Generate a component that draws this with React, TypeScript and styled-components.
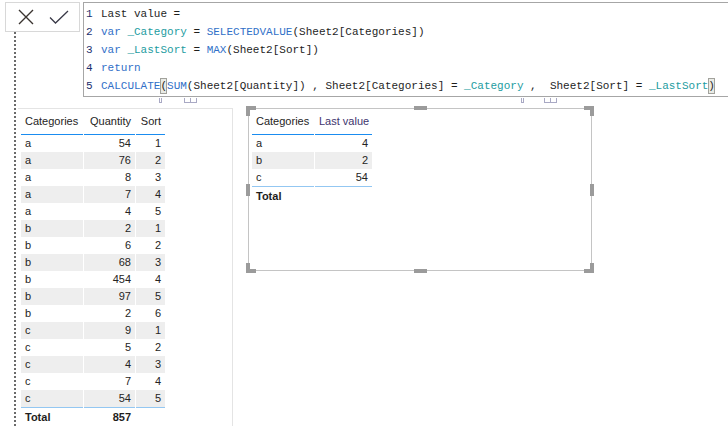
import styled, { createGlobalStyle } from 'styled-components';

const GlobalStyle = createGlobalStyle`
  html, body {
    margin: 0;
    padding: 0;
    background: #ffffff;
  }
  body {
    font-family: "Liberation Sans", Arial, sans-serif;
    color: #252423;
  }
`;

type Kind = 'plain' | 'kw' | 'var' | 'brace';
type Token = { t: string; k?: Kind };

const codeLines: Token[][] = [
  [{ t: 'Last value =' }],
  [
    { t: 'var', k: 'kw' },
    { t: ' ' },
    { t: '_Category', k: 'var' },
    { t: ' = ' },
    { t: 'SELECTEDVALUE', k: 'kw' },
    { t: '(Sheet2[Categories])' },
  ],
  [
    { t: 'var', k: 'kw' },
    { t: ' ' },
    { t: '_LastSort', k: 'var' },
    { t: ' = ' },
    { t: 'MAX', k: 'kw' },
    { t: '(Sheet2[Sort])' },
  ],
  [{ t: 'return', k: 'kw' }],
  [
    { t: 'CALCULATE', k: 'kw' },
    { t: '(', k: 'brace' },
    { t: 'SUM', k: 'kw' },
    { t: '(Sheet2[Quantity]) , Sheet2[Categories] = ' },
    { t: '_Category', k: 'var' },
    { t: ' ,  Sheet2[Sort] = ' },
    { t: '_LastSort', k: 'var' },
    { t: ')', k: 'brace' },
  ],
];

const quantities: [string, number, number][] = [
  ['a', 54, 1],
  ['a', 76, 2],
  ['a', 8, 3],
  ['a', 7, 4],
  ['a', 4, 5],
  ['b', 2, 1],
  ['b', 6, 2],
  ['b', 68, 3],
  ['b', 454, 4],
  ['b', 97, 5],
  ['b', 2, 6],
  ['c', 9, 1],
  ['c', 5, 2],
  ['c', 4, 3],
  ['c', 7, 4],
  ['c', 54, 5],
];

const lastValues: [string, number][] = [
  ['a', 4],
  ['b', 2],
  ['c', 54],
];

export default function App() {
  const total = quantities.reduce((s, r) => s + r[1], 0);

  return (
    <>
      <GlobalStyle />
      <Page>
        <Guide />
        <FormulaBar>
          <ActionBox>
            <svg width="16" height="16" viewBox="0 0 16 16">
              <path d="M1 1 L15 15 M15 1 L1 15" stroke="#3a3430" strokeWidth="1.4" fill="none" />
            </svg>
            <svg width="20" height="14" viewBox="0 0 20 14">
              <path d="M1 7.5 L6.5 13 L19 1" stroke="#3a3a48" strokeWidth="1.3" fill="none" />
            </svg>
          </ActionBox>
          <Editor>
            {codeLines.map((line, i) => (
              <CodeLine key={i}>
                <LineNo>{i + 1}</LineNo>
                {line.map((tok, j) => (
                  <Tok key={j} $kind={tok.k ?? 'plain'}>
                    {tok.t}
                  </Tok>
                ))}
              </CodeLine>
            ))}
          </Editor>
          <Grip style={{ left: 159 }} $w={3} />
          <Grip style={{ left: 184 }} $w={7} />
          <Grip style={{ left: 190 }} $w={7} />
          <Grip style={{ left: 521 }} $w={3} />
          <Grip style={{ left: 544 }} $w={7} />
          <Grip style={{ left: 550 }} $w={7} />
        </FormulaBar>

        <Canvas>
          <LeftVisual>
            <Table $cols="62px 51px 29px">
              <HeadCell>Categories</HeadCell>
              <HeadCell $right>Quantity</HeadCell>
              <HeadCell $right>Sort</HeadCell>
              {quantities.map((r, i) => (
                <Row key={i}>
                  <Cell $shade={i % 2 === 1}>{r[0]}</Cell>
                  <Cell $shade={i % 2 === 1} $right>
                    {r[1]}
                  </Cell>
                  <Cell $shade={i % 2 === 1} $right>
                    {r[2]}
                  </Cell>
                </Row>
              ))}
              <TotalCell>Total</TotalCell>
              <TotalCell $right>{total}</TotalCell>
              <TotalCell />
            </Table>
          </LeftVisual>

          <SelectedVisual>
            <Table $cols="62px 57px">
              <HeadCell>Categories</HeadCell>
              <HeadCell $right $measure>
                Last value
              </HeadCell>
              {lastValues.map((r, i) => (
                <Row key={i}>
                  <Cell $shade={i % 2 === 1}>{r[0]}</Cell>
                  <Cell $shade={i % 2 === 1} $right>
                    {r[1]}
                  </Cell>
                </Row>
              ))}
              <TotalCell>Total</TotalCell>
              <TotalCell />
            </Table>
            <Corner $pos="tl" />
            <Corner $pos="tr" />
            <Corner $pos="bl" />
            <Corner $pos="br" />
            <EdgeHandle $side="top" />
            <EdgeHandle $side="bottom" />
            <EdgeHandle $side="left" />
            <EdgeHandle $side="right" />
          </SelectedVisual>
        </Canvas>
      </Page>
    </>
  );
}

const Page = styled.div`
  position: relative;
  width: 728px;
  height: 426px;
  overflow: hidden;
  background: #ffffff;
`;

const Guide = styled.div`
  position: absolute;
  left: 14px;
  top: 32px;
  bottom: 0;
  border-left: 2px dotted #6a6a6a;
`;

const FormulaBar = styled.div`
  position: relative;
  display: flex;
  align-items: flex-start;
  padding: 2px 0 0 5px;
  height: 95px;
`;

const ActionBox = styled.div`
  box-sizing: border-box;
  width: 75px;
  height: 30px;
  border: 1px solid #d8d8d8;
  background: #ffffff;
  display: flex;
  align-items: center;
  padding-left: 12px;
  gap: 15px;
`;

const Editor = styled.div`
  box-sizing: border-box;
  flex: 1;
  margin-left: 3px;
  height: 95px;
  border: 1px solid #a6a6a6;
  border-right: none;
  padding-top: 2px;
  background: #ffffff;
`;

const CodeLine = styled.div`
  display: flex;
  align-items: center;
  height: 18px;
  font-family: "Liberation Mono", "DejaVu Sans Mono", monospace;
  font-size: 11px;
  white-space: pre;
`;

const LineNo = styled.span`
  box-sizing: border-box;
  width: 17px;
  padding-left: 2px;
  color: #1c2f6e;
`;

const tokenColor: Record<Kind, string> = {
  plain: '#1e1e1e',
  kw: '#3170c8',
  var: '#1d9c9f',
  brace: '#1e1e1e',
};

const Tok = styled.span<{ $kind: Kind }>`
  color: ${(p) => tokenColor[p.$kind]};
  ${(p) =>
    p.$kind === 'brace' &&
    `
    display: inline-block;
    height: 16px;
    line-height: 16px;
    background: #e9ebe6;
    outline: 1px solid #a2a29c;
    outline-offset: -1px;
  `}
`;

const Grip = styled.span<{ $w: number }>`
  position: absolute;
  top: 98px;
  width: ${(p) => p.$w}px;
  height: 5px;
  box-sizing: border-box;
  border: 1px solid #a9a9c4;
  border-top: none;
`;

const Canvas = styled.div`
  display: flex;
  align-items: flex-start;
  margin-top: 11px;
  padding-left: 18px;
`;

const LeftVisual = styled.div`
  box-sizing: border-box;
  width: 215px;
  height: 330px;
  border-top: 1px solid #e4e4e4;
  border-right: 1px solid #e4e4e4;
  padding: 0 0 0 3px;
`;

const SelectedVisual = styled.div`
  position: relative;
  box-sizing: border-box;
  width: 344px;
  height: 163px;
  margin-left: 15px;
  border: 1px solid #c4c4c4;
  padding: 0 0 0 3px;
`;

const Table = styled.div<{ $cols: string }>`
  display: grid;
  grid-template-columns: ${(p) => p.$cols};
  column-gap: 1px;
  font-size: 11px;
  color: #252423;
`;

const Row = styled.div`
  display: contents;
`;

const HeadCell = styled.div<{ $right?: boolean; $measure?: boolean }>`
  height: 25px;
  line-height: 25px;
  padding: 0 4px;
  text-align: ${(p) => (p.$right ? 'right' : 'left')};
  border-bottom: 1px solid #1a8cf0;
  white-space: nowrap;
  color: ${(p) => (p.$measure ? '#40356e' : '#252423')};
`;

const Cell = styled.div<{ $right?: boolean; $shade?: boolean }>`
  height: 17px;
  line-height: 17px;
  padding: 0 4px;
  text-align: ${(p) => (p.$right ? 'right' : 'left')};
  background: ${(p) => (p.$shade ? '#eeeeee' : '#ffffff')};
`;

const TotalCell = styled.div<{ $right?: boolean }>`
  height: 18px;
  line-height: 18px;
  padding: 0 4px;
  text-align: ${(p) => (p.$right ? 'right' : 'left')};
  border-top: 1px solid #93c7f2;
  font-weight: 700;
  color: #1f1e1d;
`;

const handleColor = '#9b9b9b';

const Corner = styled.span<{ $pos: 'tl' | 'tr' | 'bl' | 'br' }>`
  position: absolute;
  width: 10px;
  height: 10px;
  box-sizing: border-box;
  ${(p) => (p.$pos[0] === 't' ? 'top: -3px;' : 'bottom: -3px;')}
  ${(p) => (p.$pos[1] === 'l' ? 'left: -3px;' : 'right: -3px;')}
  ${(p) => (p.$pos[0] === 't' ? 'border-top' : 'border-bottom')}: 4px solid ${handleColor};
  ${(p) => (p.$pos[1] === 'l' ? 'border-left' : 'border-right')}: 4px solid ${handleColor};
`;

const EdgeHandle = styled.span<{ $side: 'top' | 'bottom' | 'left' | 'right' }>`
  position: absolute;
  background: ${handleColor};
  ${(p) =>
    p.$side === 'top' || p.$side === 'bottom'
      ? `width: 13px; height: 4px; left: calc(50% - 6px); ${p.$side}: -3px;`
      : `width: 4px; height: 12px; top: calc(50% - 6px); ${p.$side}: -3px;`}
`;
